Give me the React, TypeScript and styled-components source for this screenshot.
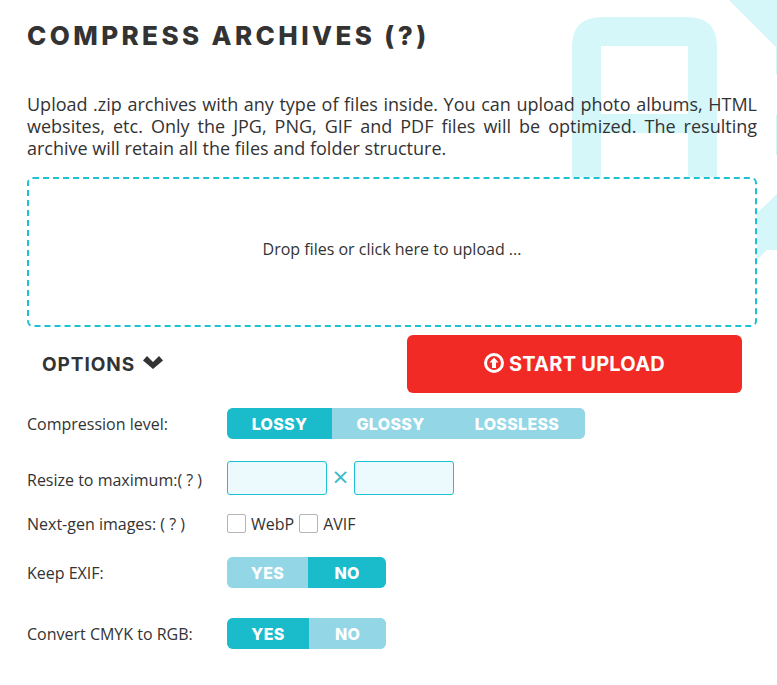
import React from "react";
import styled, { createGlobalStyle } from "styled-components";

const Global = createGlobalStyle`
  html, body { margin: 0; padding: 0; background: #fff; }
  body { font-family: "Open Sans", sans-serif; color: #333; }
`;

const Page = styled.main`
  position: relative;
  width: 777px;
  height: 685px;
  overflow: hidden;
  box-sizing: border-box;
  padding: 18px 20px 0 27px;
`;

const Watermark = styled.svg`
  position: absolute;
  inset: 0;
  z-index: 0;
`;

const Content = styled.div`
  position: relative;
  z-index: 1;
`;

const Title = styled.h1`
  margin: 0;
  height: 36px;
  font: 800 26px/36px Inter, sans-serif;
  letter-spacing: 3.4px;
  color: #333;
  white-space: nowrap;
`;

const Intro = styled.p`
  margin: 39px 0 18px;
  font-size: 18px;
  line-height: 22px;
  text-align: justify;
  color: #333;
`;

const Dropzone = styled.div`
  box-sizing: border-box;
  height: 150px;
  border: 2px dashed #1bc2d2;
  border-radius: 6px;
  background: #fff;
  display: flex;
  align-items: center;
  justify-content: center;
  font-size: 16px;
  padding-bottom: 6px;
`;

const ActionRow = styled.div`
  display: flex;
  align-items: center;
  justify-content: space-between;
  margin-top: 8px;
  padding: 0 15px;
`;

const OptionsToggle = styled.div`
  display: flex;
  align-items: center;
  gap: 8px;
  font: 700 19px Inter, sans-serif;
  letter-spacing: 0.95px;
  color: #333;

  svg {
    margin-top: -4px;
  }
`;

const StartButton = styled.button`
  width: 335px;
  height: 58px;
  border: 0;
  border-radius: 6px;
  background: #f22a25;
  color: #fff;
  display: flex;
  align-items: center;
  justify-content: center;
  gap: 5px;
  font: 700 20px Inter, sans-serif;
  letter-spacing: 0.25px;
  padding: 0;

  svg {
    margin-top: -3px;
  }
`;

const Row = styled.div<{ $top: number; $height: number }>`
  display: flex;
  align-items: center;
  margin-top: ${(p) => p.$top}px;
  height: ${(p) => p.$height}px;
`;

const Label = styled.label<{ $drop?: number }>`
  width: 200px;
  flex: none;
  font-size: 16px;
  color: #333;
  padding-top: ${(p) => p.$drop ?? 0}px;
`;

const Segmented = styled.div`
  display: flex;
  height: 31px;
  border-radius: 6px;
  overflow: hidden;
  background: #93d7e7;
`;

const Segment = styled.span<{ $active?: boolean; $width: number }>`
  width: ${(p) => p.$width}px;
  display: flex;
  align-items: center;
  justify-content: center;
  background: ${(p) => (p.$active ? "#1abccb" : "#93d7e7")};
  color: #fff;
  font: 800 16px Inter, sans-serif;
  letter-spacing: 0.3px;
`;

const SizeInput = styled.input`
  box-sizing: border-box;
  width: 100px;
  height: 34px;
  border: 1px solid #1bc2d2;
  border-radius: 3px;
  background: #ecfafd;
  padding: 0;
`;

const Times = styled.span`
  width: 27px;
  height: 34px;
  text-align: center;
  color: #3dbcc8;
  font-size: 28px;
  line-height: 30px;
`;

const CheckLabel = styled.span`
  font-size: 16px;
  color: #333;
  margin: 0 5px 0 5px;
`;

const Check = styled.input`
  appearance: none;
  box-sizing: border-box;
  width: 19px;
  height: 19px;
  margin: 0;
  border: 1px solid #b5b5b5;
  border-radius: 2px;
  background: #fff;
`;

const Modes = [
  { name: "LOSSY", width: 105, active: true },
  { name: "GLOSSY", width: 117 },
  { name: "LOSSLESS", width: 136 },
];

export default function App() {
  return (
    <Page>
      <Global />
      <Watermark width="777" height="685" viewBox="0 0 777 685" aria-hidden="true">
        <g fill="#d6f7fa">
          <path d="M572 178V47Q572 17 602 17H687Q717 17 717 47V178H688V133H601V178ZM601 46V114H688V46Z" fillRule="evenodd" />
          <path d="M729 0L777 48V0Z" />
          <path d="M757 213L777 194V250H767L757 260Z" />
          <rect x="776" y="48" width="1" height="26" />
          <rect x="776" y="115" width="1" height="40" />
        </g>
      </Watermark>
      <Content>
        <Title>COMPRESS ARCHIVES (?)</Title>
        <Intro>
          Upload .zip archives with any type of files inside. You can upload photo albums, HTML
          websites, etc. Only the JPG, PNG, GIF and PDF files will be optimized. The resulting
          archive will retain all the files and folder structure.
        </Intro>
        <Dropzone>Drop files or click here to upload ...</Dropzone>
        <ActionRow>
          <OptionsToggle>
            OPTIONS
            <svg width="20" height="14" viewBox="0 0 20 14" aria-hidden="true">
              <path d="M0 5.5L4 1L10 7L16 1L20 5.5L10 14Z" fill="#333" />
            </svg>
          </OptionsToggle>
          <StartButton>
            <svg width="20" height="20" viewBox="0 0 20 20" aria-hidden="true">
              <circle cx="10" cy="10" r="8.5" fill="none" stroke="#fff" strokeWidth="3" />
              <path d="M10 4.5L14.5 9.5H12V15H8V9.5H5.5Z" fill="#fff" />
            </svg>
            START UPLOAD
          </StartButton>
        </ActionRow>
        <Row $top={15} $height={31}>
          <Label>Compression level:</Label>
          <Segmented>
            {Modes.map((m) => (
              <Segment key={m.name} $active={m.active} $width={m.width}>
                {m.name}
              </Segment>
            ))}
          </Segmented>
        </Row>
        <Row $top={22} $height={34}>
          <Label $drop={4}>Resize to maximum:( ? )</Label>
          <SizeInput />
          <Times>×</Times>
          <SizeInput />
        </Row>
        <Row $top={19} $height={19}>
          <Label>Next-gen images: ( ? )</Label>
          <Check type="checkbox" />
          <CheckLabel>WebP</CheckLabel>
          <Check type="checkbox" />
          <CheckLabel>AVIF</CheckLabel>
        </Row>
        <Row $top={24} $height={31}>
          <Label>Keep EXIF:</Label>
          <Segmented>
            <Segment $width={81}>YES</Segment>
            <Segment $width={78} $active>NO</Segment>
          </Segmented>
        </Row>
        <Row $top={30} $height={31}>
          <Label>Convert CMYK to RGB:</Label>
          <Segmented>
            <Segment $width={82} $active>YES</Segment>
            <Segment $width={77}>NO</Segment>
          </Segmented>
        </Row>
      </Content>
    </Page>
  );
}
